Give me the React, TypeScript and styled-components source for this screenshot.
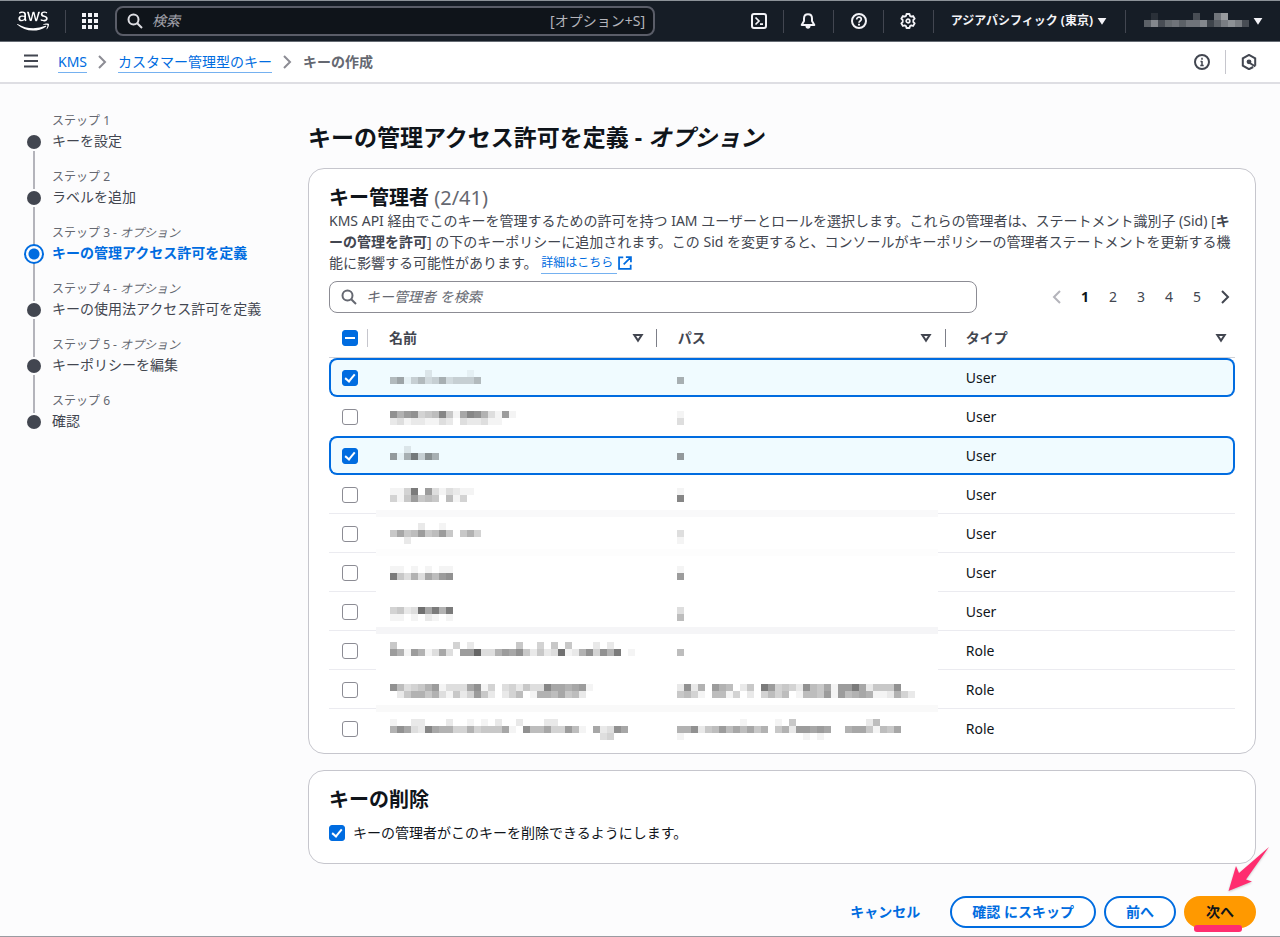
import React, { useEffect, useRef, useState } from "react";
import styled, { createGlobalStyle, css } from "styled-components";
import { FaAws } from "react-icons/fa";

const color = {
  ink: "#0f141a",
  text: "#424650",
  muted: "#656871",
  link: "#006ce0",
  line: "#c6c6cd",
  page: "#fcfcfd",
  nav: "#161d26",
};

const GlobalStyle = createGlobalStyle`
  *, *::before, *::after { box-sizing: border-box; }
  body {
    margin: 0;
    background: ${color.page};
    color: ${color.ink};
    font-family: "Noto Sans", "Noto Sans CJK JP", sans-serif;
    font-size: 14px;
    line-height: 20px;
  }
  button, input { font: inherit; color: inherit; }
  button { border: 0; padding: 0; background: none; cursor: pointer; }
  h1, h2, p, ol, ul { margin: 0; padding: 0; list-style: none; }
`;

/* ---------- icons ---------- */

const Icon = styled.svg.attrs<{ $size?: number }>({ viewBox: "0 0 16 16", "aria-hidden": true })<{ $size?: number }>`
  display: block;
  flex: none;
  width: ${(p) => p.$size ?? 16}px;
  height: ${(p) => p.$size ?? 16}px;
  fill: none;
  stroke: currentColor;
  stroke-width: 2;
  stroke-linejoin: round;
`;

const SearchIcon = () => (
  <Icon>
    <circle cx="6.5" cy="6.5" r="5" />
    <path d="M10.2 10.2 15 15" />
  </Icon>
);

const AppsIcon = () => (
  <Icon>
    <g fill="currentColor" stroke="none">
      {[0, 6, 12].map((y) => [0, 6, 12].map((x) => <rect key={`${x}-${y}`} x={x} y={y} width="4" height="4" />))}
    </g>
  </Icon>
);

const TerminalIcon = () => (
  <Icon>
    <rect x="1" y="1" width="14" height="14" rx="2" />
    <path d="M4.5 4.5 8 8l-3.500 3.500M9 11.200h3" strokeWidth="1.700" strokeLinejoin="miter" />
  </Icon>
);

const BellIcon = () => (
  <Icon>
    <path d="M8 1.300c-2.800 0-4 2-4 4.200V8L1.700 12h12.600L12 8V5.500c0-2.200-1.200-4.200-4-4.200Z" />
    <path d="M5.500 13h5c0 1.800-1 2.800-2.500 2.800S5.500 14.800 5.500 13Z" fill="currentColor" stroke="none" />
  </Icon>
);

const HelpIcon = () => (
  <Icon>
    <circle cx="8" cy="8" r="7" />
    <path d="M5.700 6.500c0-1.500 1-2.300 2.300-2.300s2.300.8 2.300 2.100C10.300 8 8 8 8 9.700" strokeWidth="1.700" />
    <path d="M8 10.700v1.800" />
  </Icon>
);

const GearIcon = () => (
  <Icon>
    <path
      d="m6.500 1-.5 1.900-1.300.7L2.900 3 1.300 5.700 2.700 7v2l-1.400 1.300L2.900 13l1.800-.6 1.300.7.5 1.900h3l.5-1.900 1.300-.7 1.800.6 1.600-2.700L13.300 9V7l1.400-1.300L13.100 3l-1.800.6-1.300-.7L9.500 1Z"
      strokeWidth="1.800"
    />
    <circle cx="8" cy="8" r="1.800" strokeWidth="1.700" />
  </Icon>
);

const InfoIcon = () => (
  <Icon>
    <circle cx="8" cy="8" r="7" />
    <path d="M8 3.800v2M8 7v5M6.500 7.600H8M6.300 11.500h3.400" strokeWidth="1.500" />
  </Icon>
);

const HexIcon = () => (
  <Icon>
    <path d="M12.200 13 8 15.200 1.800 11.700V4.300L8 .9l6.200 3.400v7.400" strokeLinejoin="miter" />
    <circle cx="8" cy="7.800" r="2.400" fill="currentColor" stroke="none" />
    <path d="m8 8.500 6.300 4" />
  </Icon>
);

const MenuIcon = () => (
  <Icon>
    <path d="M1 1.500h14M1 7h14M1 12.500h14" />
  </Icon>
);

const ChevronIcon = ({ left }: { left?: boolean }) => (
  <Icon>
    <path d={left ? "M11 2 5 8l6 6" : "m5 2 6 6-6 6"} strokeLinejoin="miter" />
  </Icon>
);

const CaretIcon = () => (
  <Icon $size={10}>
    <path d="M1 3h14L8 14Z" fill="currentColor" stroke="none" />
  </Icon>
);

const SortIcon = () => (
  <Icon $size={12}>
    <path d="M3 4h10l-5 7.500Z" strokeWidth="2.600" strokeLinejoin="miter" />
  </Icon>
);

const ExternalIcon = () => (
  <Icon $size={14}>
    <path d="M6 1.500H1.200v13.300h13.300V10M9 1.200h5.800V7M14.500 1.500l-8 8" strokeLinejoin="miter" />
  </Icon>
);

/* ---------- masked values ---------- */

/* Each line is a run of 7px blocks; the hex digit of a block is its strength. */
function Mosaic({ lines, top, height, light }: { lines: string[]; top: number; height: number; light?: boolean }) {
  const width = Math.max(...lines.map((l) => l.length)) * 7;
  return (
    <MosaicSvg width={width} height={height} viewBox={`0 0 ${width} ${height}`} aria-hidden="true">
      {lines.map((line, row) =>
        [...line].map((digit, i) => {
          const level = parseInt(digit, 16);
          return level ? (
            <rect
              key={`${row}-${i}`}
              x={i * 7}
              y={top + row * 7}
              width="7"
              height="7"
              fill={light ? "#fff" : "#000"}
              fillOpacity={(level * 11) / 255}
            />
          ) : null;
        })
      )}
    </MosaicSvg>
  );
}

const MosaicSvg = styled.svg`
  display: block;
  shape-rendering: crispEdges;
`;

/* ---------- top navigation ---------- */

const TopNav = styled.header`
  display: flex;
  align-items: center;
  height: 42px;
  padding: 0 17px;
  background: ${color.nav};
  color: #dedee3;
  border-top: 1px solid #8c9298;
  border-bottom: 1px solid #656b73;
`;

const LogoLink = styled.a`
  display: flex;
  color: #fff;
`;

const NavRule = styled.span<{ $gap: number }>`
  flex: none;
  width: 1px;
  height: 23px;
  margin: 0 ${(p) => p.$gap}px;
  background: #424650;
`;

const NavButton = styled.button`
  display: flex;
  align-items: center;
  gap: 4px;
  color: #f3f3f7;
  font-size: 12px;
  font-weight: 700;
  white-space: nowrap;
`;

const GlobalSearch = styled.label`
  display: flex;
  align-items: center;
  flex: 0 1 540px;
  min-width: 200px;
  height: 30px;
  margin-left: 17px;
  padding: 0 8px 0 10px;
  border: 2px solid #5a5d68;
  border-radius: 8px;
  background: ${color.ink};
`;

const GlobalInput = styled.input`
  flex: 1;
  min-width: 0;
  padding: 0 9px;
  border: 0;
  outline: 0;
  background: none;
  &::placeholder {
    color: #a4a4ad;
    font-style: italic;
    opacity: 1;
  }
`;

const Shortcut = styled.span`
  color: #b4b4bb;
  white-space: nowrap;
`;

const NavEnd = styled.div`
  display: flex;
  align-items: center;
  margin-left: auto;
`;

/* ---------- breadcrumb bar ---------- */

const CrumbBar = styled.div`
  display: flex;
  align-items: center;
  height: 42px;
  padding: 0 23px;
  background: #fff;
  border-bottom: 2px solid #dedee3;
  color: ${color.text};
`;

const CrumbList = styled.ol`
  display: flex;
  align-items: center;
  margin-left: 19px;
`;

const Crumb = styled.li`
  display: flex;
  align-items: center;
  color: ${color.muted};
  font-weight: 700;
  svg {
    margin: 0 8px 0 7px;
    color: #8c8c94;
  }
`;

const CrumbLink = styled.a`
  color: ${color.link};
  font-weight: 400;
  text-decoration: none;
  border-bottom: 1px solid #75b1f0;
`;

const CrumbEnd = styled.div`
  display: flex;
  align-items: center;
  margin-left: auto;
`;

const CrumbRule = styled.span`
  width: 1px;
  height: 24px;
  margin: 0 15px;
  background: ${color.line};
`;

const IconButton = styled.button`
  display: flex;
`;

/* ---------- page frame ---------- */

const Page = styled.div`
  display: flex;
  flex-direction: column;
  min-height: 100vh;
  border-bottom: 1px solid #9a9ba1;
`;

const Wizard = styled.div`
  display: grid;
  grid-template-columns: 284px minmax(0, 1fr);
  padding: 0 24px 7px;
`;

const Steps = styled.ol`
  padding-top: 27px;
`;

const Step = styled.li`
  position: relative;
  display: grid;
  grid-template-columns: 20px 1fr;
  column-gap: 8px;
  height: 56px;
  grid-template-rows: 20px 22px;
  &:not(:last-child)::before {
    content: "";
    position: absolute;
    left: 9px;
    top: 40px;
    width: 2px;
    height: 38px;
    background: #b4b4bb;
  }
`;

const StepLabel = styled.span`
  grid-column: 2;
  color: ${color.muted};
  font-size: 12px;
`;

const StepName = styled.a<{ $active?: boolean }>`
  color: ${(p) => (p.$active ? color.link : color.text)};
  font-weight: ${(p) => (p.$active ? 700 : 400)};
  text-decoration: none;
`;

const Marker = styled.span<{ $active?: boolean }>`
  position: relative;
  z-index: 1;
  align-self: center;
  justify-self: center;
  width: 14px;
  height: 14px;
  border-radius: 50%;
  background: ${color.text};
  ${(p) =>
    p.$active &&
    css`
      width: 20px;
      height: 20px;
      border: 2px solid ${color.link};
      background: radial-gradient(circle, ${color.link} 5px, ${color.page} 6px);
    `}
`;

const Main = styled.main`
  display: flex;
  flex-direction: column;
  padding-top: 37px;
`;

const Title = styled.h1`
  margin-bottom: 15px;
  font-size: 23px;
  line-height: 32px;
  font-weight: 700;
`;

const Card = styled.section<{ $bottom: number }>`
  padding: 17px 20px ${(p) => p.$bottom}px;
  border: 1px solid ${color.line};
  border-radius: 16px;
  background: #fff;
  & + & {
    margin-top: 16px;
  }
`;

const CardTitle = styled.h2`
  font-size: 20px;
  line-height: 24px;
  font-weight: 700;
`;

const Counter = styled.span`
  color: ${color.muted};
  font-weight: 400;
`;

const Description = styled.p`
  color: ${color.text};
  line-height: 21px;
  line-break: anywhere;
`;

const LearnMore = styled.a`
  display: inline-flex;
  align-items: center;
  height: 20px;
  color: ${color.link};
  font-size: 12px;
  text-decoration: none;
  vertical-align: bottom;
  span {
    padding-right: 4px;
    border-bottom: 1px solid #75b1f0;
  }
  svg {
    margin-left: 1px;
  }
`;

/* ---------- table tools ---------- */

const Tools = styled.div`
  display: flex;
  align-items: center;
  justify-content: space-between;
  margin: 8px 0 6px;
`;

const FilterBox = styled.label`
  display: flex;
  align-items: center;
  width: 648px;
  min-width: 0;
  height: 32px;
  padding: 0 11px;
  border: 1px solid #8c8c94;
  border-radius: 8px;
  color: ${color.muted};
`;

const FilterInput = styled.input`
  flex: 1;
  min-width: 0;
  padding: 0 9px;
  border: 0;
  outline: 0;
  background: none;
  &::placeholder {
    color: ${color.muted};
    font-style: italic;
    opacity: 1;
  }
`;

const Pager = styled.nav`
  display: flex;
  gap: 8px;
`;

const PageButton = styled.button<{ $current?: boolean }>`
  display: flex;
  align-items: center;
  justify-content: center;
  width: 20px;
  height: 20px;
  color: ${(p) => (p.$current ? color.ink : color.text)};
  font-weight: ${(p) => (p.$current ? 700 : 400)};
  &:disabled {
    color: #b4b4bb;
  }
`;

/* ---------- check box ---------- */

const CheckInput = styled.input`
  appearance: none;
  position: relative;
  display: block;
  flex: none;
  width: 16px;
  height: 16px;
  margin: 0;
  border: 1px solid #8c8c94;
  border-radius: 3px;
  background: #fff;
  &:checked,
  &:indeterminate {
    border-color: ${color.link};
    background: ${color.link};
  }
  &:checked::after {
    content: "";
    position: absolute;
    left: 4px;
    top: 1px;
    width: 6px;
    height: 10px;
    border: solid #fff;
    border-width: 0 2px 2px 0;
    transform: rotate(40deg);
  }
  &:indeterminate::after {
    content: "";
    position: absolute;
    left: 2px;
    top: 6px;
    width: 10px;
    height: 2px;
    background: #fff;
  }
`;

/* ---------- table ---------- */

const Table = styled.table`
  width: 100%;
  table-layout: fixed;
  border-collapse: separate;
  border-spacing: 0;
`;

const SelectCol = styled.col`
  width: 47px;
`;
const ValueCol = styled.col`
  width: 31%;
`;

const HeadCell = styled.th`
  height: 39px;
  padding: 0;
  border-bottom: 1px solid #d0d2d8;
  color: ${color.text};
  font-weight: 700;
  text-align: left;
`;

const HeadInner = styled.div<{ $left: number; $right?: number; $rule?: "start" | "end" }>`
  position: relative;
  display: flex;
  align-items: center;
  justify-content: space-between;
  height: 18px;
  padding-left: ${(p) => p.$left}px;
  padding-right: ${(p) => p.$right ?? 0}px;
  ${(p) =>
    p.$rule &&
    css`
      &::before {
        content: "";
        position: absolute;
        top: 0;
        bottom: 0;
        width: 1px;
        background: #7d7f88;
        ${p.$rule === "start" ? "left: 7px;" : "right: 0;"}
      }
    `}
`;

const SelectHead = styled(HeadInner)`
  margin-right: 8px;
  border-right: 1px solid ${color.line};
`;

const Cell = styled.td`
  position: relative;
  height: 39px;
  padding: 0;
`;

const SelectCell = styled(Cell)`
  padding-left: 13px;
`;

const ValueCell = styled(Cell)<{ $left: number; $band?: string }>`
  padding-left: ${(p) => p.$left}px;
  ${(p) =>
    p.$band &&
    css`
      &::after {
        content: "";
        position: absolute;
        left: 0;
        right: 0;
        bottom: -3px;
        height: 7px;
        background: ${p.$band};
      }
    `}
`;

const TypeCell = styled(Cell)`
  padding-left: 28px;
`;

const Row = styled.tr<{ $selected: boolean; $divider: boolean }>`
  ${(p) =>
    p.$divider &&
    css`
      ${SelectCell}, ${TypeCell} {
        box-shadow: inset 0 -1px 0 #ebebf0;
      }
    `}
  ${(p) =>
    p.$selected &&
    css`
      ${Cell} {
        background: #f0fbff;
        box-shadow: inset 0 2px 0 ${color.link}, inset 0 -2px 0 ${color.link};
      }
      ${SelectCell} {
        padding-left: 11px;
        border: solid ${color.link};
        border-width: 2px 0 2px 2px;
        border-radius: 8px 0 0 8px;
        box-shadow: none;
      }
      ${TypeCell} {
        border: solid ${color.link};
        border-width: 2px 2px 2px 0;
        border-radius: 0 8px 8px 0;
        box-shadow: none;
      }
    `}
`;

/* ---------- key deletion and actions ---------- */

const CheckLabel = styled.label`
  display: flex;
  align-items: center;
  gap: 8px;
  margin-top: 11px;
`;

const Actions = styled.div`
  display: flex;
  justify-content: flex-end;
  gap: 8px;
  margin-top: 32px;
`;

const ActionButton = styled.button<{ $kind: "link" | "normal" | "primary" }>`
  height: 32px;
  padding: 0 20px;
  border: 2px solid ${(p) => (p.$kind === "normal" ? color.link : p.$kind === "primary" ? "#ff9900" : "transparent")};
  border-radius: 16px;
  background: ${(p) => (p.$kind === "normal" ? "#fff" : p.$kind === "primary" ? "#ff9900" : "transparent")};
  color: ${(p) => (p.$kind === "primary" ? color.ink : color.link)};
  font-weight: 700;
  line-height: 20px;
  white-space: nowrap;
`;

const NextWrap = styled.div`
  position: relative;
`;

const Underscore = styled.span`
  position: absolute;
  left: 10px;
  bottom: -4px;
  width: 48px;
  height: 7px;
  border-radius: 3px;
  background: #ff2d6f;
`;

const Arrow = styled.svg`
  position: absolute;
  right: -14px;
  bottom: 36px;
  width: 43px;
  height: 46px;
  fill: #ff2d6f;
  filter: drop-shadow(0 1px 1px rgba(0, 0, 0, 0.2));
`;

/* ---------- data ---------- */

const steps = [
  { name: "キーを設定" },
  { name: "ラベルを追加" },
  { name: "キーの管理アクセス許可を定義", optional: true, active: true },
  { name: "キーの使用法アクセス許可を定義", optional: true },
  { name: "キーポリシーを編集", optional: true },
  { name: "確認" },
];

type Principal = { type: string; top: number; name: string[]; path: string[]; band?: string };

const principals: Principal[] = [
  { type: "User", top: 12, name: ["000002000001", "6814634734446"], path: ["0", "7"] },
  { type: "User", top: 14, name: ["a79a456b518ba73191", "23122113203223110"], path: ["1", "3"] },
  { type: "User", top: 10, name: ["002", "917c4a7"], path: ["0", "9"] },
  { type: "User", top: 13, name: ["114c09313211", "41595650614"], path: ["1", "b"], band: "#f9f9fa" },
  { type: "User", top: 9, name: ["000020010", "5856956950574", "002"], path: ["0", "3", "1"], band: "#fdfdfd" },
  { type: "User", top: 13, name: ["110101011", "c5373869a"], path: ["1", "9"] },
  { type: "User", top: 15, name: ["4523d8c7c", "110102101"], path: ["3", "6"], band: "#f5f5f7" },
  {
    type: "Role",
    top: 11,
    name: ["5000000004" + "0200000050" + "0405050002" + "02", "9719713830" + "99e33798a5" + "2523d127a4" + "a7c01"],
    path: ["0", "6"],
  },
  {
    type: "Role",
    top: 14,
    name: ["a634579133" + "38a1403425" + "33b887891", "0257757315" + "2495202460" + "17768562"],
    path: ["2a27097602" + "50c94542a6" + "58199c8255" + "5a", "5641066140" + "2046460166" + "5919678711" + "2742"],
    band: "#f9f9f9",
  },
  {
    type: "Role",
    top: 10,
    name: [
      "1002200020" + "0101020020" + "0022",
      "7a832b8774" + "474555810a" + "6684496108" + "23a8",
      "0000000000" + "0000000000" + "0000000000" + "34",
    ],
    path: [
      "0000000001" + "0000105000" + "000000026",
      "77a2569686" + "8570572998" + "9800788516" + "58",
      "1000000000" + "0000000010" + "1",
    ],
  },
];

/* ---------- app ---------- */

export default function App() {
  const [selected, setSelected] = useState<number[]>([0, 2]);
  const [allowDelete, setAllowDelete] = useState(true);
  const allRef = useRef<HTMLInputElement>(null);

  useEffect(() => {
    if (allRef.current) {
      allRef.current.indeterminate = selected.length > 0 && selected.length < principals.length;
    }
  }, [selected]);

  const toggle = (i: number) => setSelected((s) => (s.includes(i) ? s.filter((x) => x !== i) : [...s, i]));
  const toggleAll = () => setSelected((s) => (s.length ? [] : principals.map((_, i) => i)));

  return (
    <Page>
      <GlobalStyle />
      <TopNav>
        <LogoLink href="#" aria-label="AWS">
          <FaAws size={32} />
        </LogoLink>
        <NavRule $gap={16} />
        <NavButton aria-label="サービス">
          <AppsIcon />
        </NavButton>
        <GlobalSearch>
          <SearchIcon />
          <GlobalInput type="text" placeholder="検索" aria-label="検索" />
          <Shortcut>[オプション+S]</Shortcut>
        </GlobalSearch>
        <NavEnd>
          <NavButton aria-label="CloudShell">
            <TerminalIcon />
          </NavButton>
          <NavRule $gap={16} />
          <NavButton aria-label="通知">
            <BellIcon />
          </NavButton>
          <NavRule $gap={17} />
          <NavButton aria-label="ヘルプ">
            <HelpIcon />
          </NavButton>
          <NavRule $gap={16} />
          <NavButton aria-label="設定">
            <GearIcon />
          </NavButton>
          <NavRule $gap={17} />
          <NavButton>
            アジアパシフィック (東京)
            <CaretIcon />
          </NavButton>
          <NavRule $gap={18} />
          <NavButton aria-label="アカウント">
            <Mosaic light height={30} top={7} lines={["0200000500" + "9d", "7b589799b4" + "7aca5"]} />
            <CaretIcon />
          </NavButton>
        </NavEnd>
      </TopNav>

      <CrumbBar>
        <IconButton aria-label="メニュー">
          <MenuIcon />
        </IconButton>
        <CrumbList>
          <Crumb>
            <CrumbLink href="#">KMS</CrumbLink>
            <ChevronIcon />
          </Crumb>
          <Crumb>
            <CrumbLink href="#">カスタマー管理型のキー</CrumbLink>
            <ChevronIcon />
          </Crumb>
          <Crumb>キーの作成</Crumb>
        </CrumbList>
        <CrumbEnd>
          <IconButton aria-label="情報">
            <InfoIcon />
          </IconButton>
          <CrumbRule />
          <IconButton aria-label="診断">
            <HexIcon />
          </IconButton>
        </CrumbEnd>
      </CrumbBar>

      <Wizard>
        <Steps>
          {steps.map((s, i) => (
            <Step key={s.name}>
              <StepLabel>
                ステップ {i + 1}
                {s.optional && (
                  <>
                    {" - "}
                    <i>オプション</i>
                  </>
                )}
              </StepLabel>
              <Marker $active={s.active} />
              <StepName href="#" $active={s.active}>
                {s.name}
              </StepName>
            </Step>
          ))}
        </Steps>

        <Main>
          <Title>
            キーの管理アクセス許可を定義 - <i>オプション</i>
          </Title>

          <Card $bottom={5}>
            <CardTitle>
              キー管理者 <Counter>(2/41)</Counter>
            </CardTitle>
            <Description>
              KMS API 経由でこのキーを管理するための許可を持つ IAM ユーザーとロールを選択します。これらの管理者は、ステートメント識別子 (Sid) [
              <b>キーの管理を許可</b>] の下のキーポリシーに追加されます。この Sid
              を変更すると、コンソールがキーポリシーの管理者ステートメントを更新する機能に影響する可能性があります。{" "}
              <LearnMore href="#">
                <span>詳細はこちら</span>
                <ExternalIcon />
              </LearnMore>
            </Description>

            <Tools>
              <FilterBox>
                <SearchIcon />
                <FilterInput type="text" placeholder="キー管理者 を検索" aria-label="キー管理者 を検索" />
              </FilterBox>
              <Pager aria-label="ページ">
                <PageButton disabled aria-label="前のページ">
                  <ChevronIcon left />
                </PageButton>
                {[1, 2, 3, 4, 5].map((n) => (
                  <PageButton key={n} $current={n === 1}>
                    {n}
                  </PageButton>
                ))}
                <PageButton aria-label="次のページ">
                  <ChevronIcon />
                </PageButton>
              </Pager>
            </Tools>

            <Table>
              <colgroup>
                <SelectCol />
                <ValueCol />
                <ValueCol />
                <col />
              </colgroup>
              <thead>
                <tr>
                  <HeadCell>
                    <SelectHead $left={13}>
                      <CheckInput
                        ref={allRef}
                        type="checkbox"
                        checked={selected.length === principals.length}
                        onChange={toggleAll}
                        aria-label="すべて選択"
                      />
                    </SelectHead>
                  </HeadCell>
                  <HeadCell>
                    <HeadInner $left={13} $right={13} $rule="end">
                      名前
                      <SortIcon />
                    </HeadInner>
                  </HeadCell>
                  <HeadCell>
                    <HeadInner $left={21} $right={6}>
                      パス
                      <SortIcon />
                    </HeadInner>
                  </HeadCell>
                  <HeadCell>
                    <HeadInner $left={28} $right={8} $rule="start">
                      タイプ
                      <SortIcon />
                    </HeadInner>
                  </HeadCell>
                </tr>
              </thead>
              <tbody>
                {principals.map((p, i) => {
                  const isSelected = selected.includes(i);
                  const divider = i < principals.length - 1 && !isSelected && !selected.includes(i + 1);
                  return (
                    <Row key={i} $selected={isSelected} $divider={divider}>
                      <SelectCell>
                        <CheckInput
                          type="checkbox"
                          checked={isSelected}
                          onChange={() => toggle(i)}
                          aria-label={`${p.type} ${i + 1}`}
                        />
                      </SelectCell>
                      <ValueCell $left={14} $band={p.band}>
                        <Mosaic lines={p.name} top={p.top} height={39} />
                      </ValueCell>
                      <ValueCell $left={20} $band={p.band}>
                        <Mosaic lines={p.path} top={p.top} height={39} />
                      </ValueCell>
                      <TypeCell>{p.type}</TypeCell>
                    </Row>
                  );
                })}
              </tbody>
            </Table>
          </Card>

          <Card $bottom={20}>
            <CardTitle>キーの削除</CardTitle>
            <CheckLabel>
              <CheckInput type="checkbox" checked={allowDelete} onChange={(e) => setAllowDelete(e.target.checked)} />
              キーの管理者がこのキーを削除できるようにします。
            </CheckLabel>
          </Card>

          <Actions>
            <ActionButton $kind="link">キャンセル</ActionButton>
            <ActionButton $kind="normal">確認 にスキップ</ActionButton>
            <ActionButton $kind="normal">前へ</ActionButton>
            <NextWrap>
              <ActionButton $kind="primary">次へ</ActionButton>
              <Underscore />
              <Arrow viewBox="0 0 43 46" aria-hidden="true">
                <path d="M1.500 45 9 20l3 7L42 1 19 33.500l6 2Z" />
              </Arrow>
            </NextWrap>
          </Actions>
        </Main>
      </Wizard>
    </Page>
  );
}
